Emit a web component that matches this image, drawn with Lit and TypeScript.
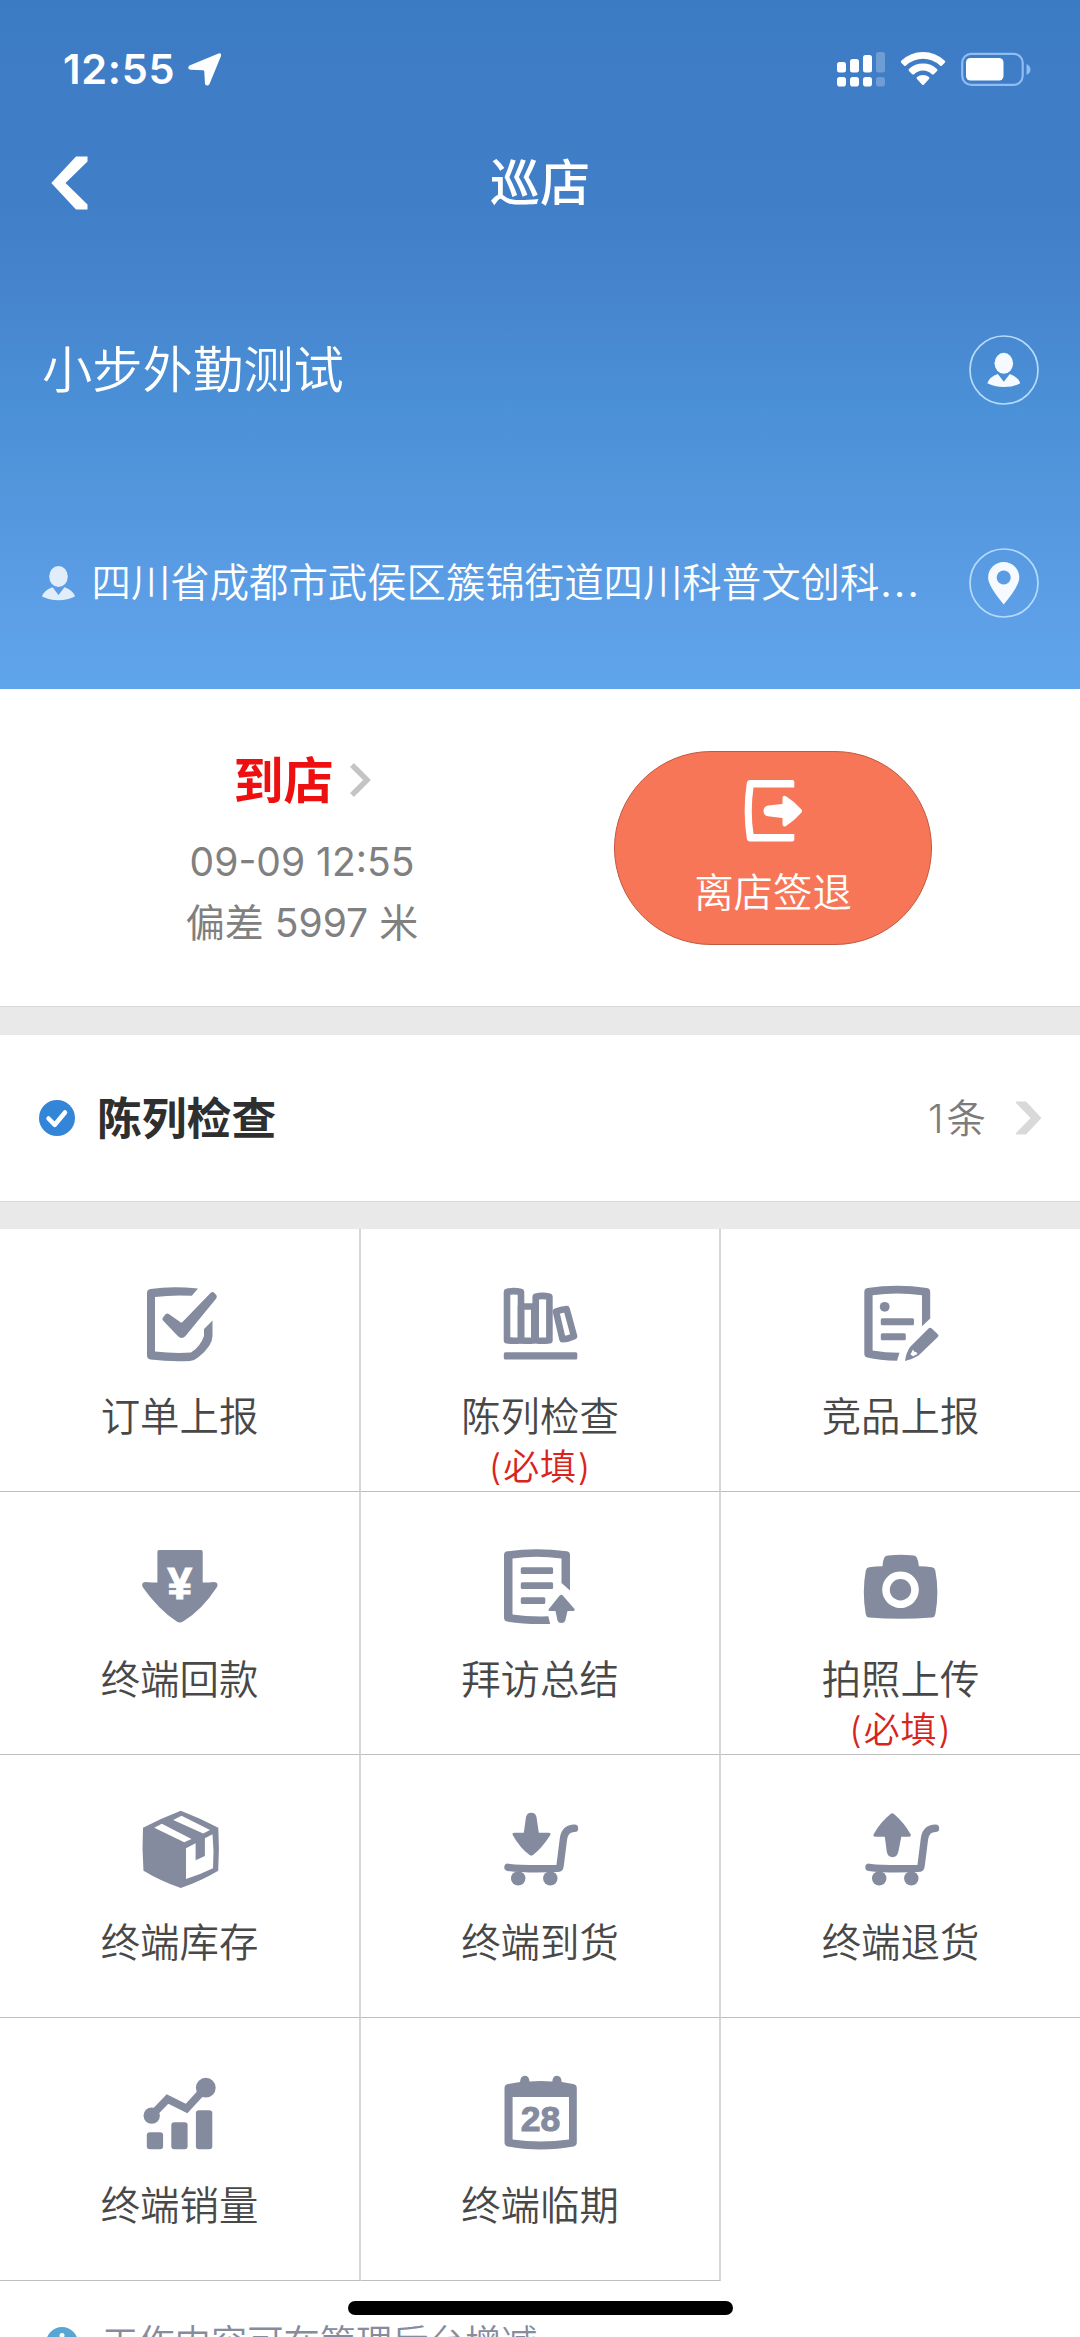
import { LitElement, html, css, svg, nothing, type TemplateResult } from "lit";
import { customElement, property } from "lit/decorators.js";

const FONT = css`Inter, "Noto Sans CJK SC", sans-serif`;

/* Task icons, all drawn on an 80 x 80 grid in the current colour. */
const cart = svg`
  <path d="M8 57.3Q26 59.6 57 58.4Q59.8 58.4 60.1 55.5L63.5 28.5Q65 18.6 74.5 18.3" fill="none" stroke="currentColor" stroke-width="7.4" stroke-linecap="round" stroke-linejoin="round"/>
  <circle cx="18.2" cy="68.4" r="7.2"/><circle cx="50.3" cy="68.4" r="7.2"/>`;

const icons: Record<string, TemplateResult> = {
  order: svg`
    <path d="M58 4.6Q32 1.6 10.5 5Q7 5.6 7 9.2V71.5Q7 75 10.5 75.5Q30 78 50 77Q54 77 58 73.6Q72.5 62 72.5 52V36.5L64 45V52Q60.5 62.500 51 68.600Q33 69.600 15 67.500V13Q33 10.700 51.800 11.800Z"/>
    <path d="M23 33.500L25.500 30.300Q27 28.800 28.800 30L40.500 38.300Q41.500 38.900 42.500 38L70.500 9Q72.600 7 74.400 9L76.300 11Q77.500 12.500 76.200 14.500L45.500 52Q41.600 56 37.800 52L23 36.500Q21.700 35 23 33.500Z"/>`,
  shelf: svg`
    <g fill="none" stroke="currentColor" stroke-width="6.6" stroke-linejoin="round">
      <path d="M7 8Q13.500 6.300 21 8V56.200Q13.500 57.300 7 56.200Z"/>
      <path d="M21 22.500H34.300V56.200Q28 57.300 21 56.200Z"/>
      <path d="M35.700 12.800Q42.500 11 49.400 12.800V56.200Q42.500 57.300 35.700 56.200Z"/>
      <path d="M56 27.600Q61 25.500 66.600 25L74 52.200Q68 55 62.500 55.300Z"/>
    </g>
    <rect x="3.800" y="68.200" width="73.500" height="7.200" rx="1.500"/>`,
  rival: svg`
    <path d="M36 76.800Q18 76.500 6.300 73.600Q3.300 72.800 3.300 69.500V8Q3.300 4.600 6.500 4Q36 -.6 66 4Q69.200 4.700 69.200 8V34.500L61 42.300V11.300Q36 7.600 11.600 11.300V66.500Q24 68.700 38.500 68.700Z"/>
    <circle cx="23.700" cy="22.800" r="4.900"/>
    <rect x="19.800" y="34.200" width="33.200" height="7" rx="1.500"/>
    <rect x="19.800" y="49.300" width="25" height="7" rx="1.500"/>
    <path fill-rule="evenodd" d="M67.500 44.500Q69 43 70.500 44.300L76.800 50.300Q78.200 51.600 76.800 53L57.500 71.500Q52 75 44 77Q45 69 49 63ZM52 65.500L49.500 70.600L52 72.300L56.500 70L55 67.800L53.500 68Z"/>`,
  payment: svg`
    <path d="M19 3H61Q62.700 3 62.700 5V35.500Q69 35.500 74 35Q79 35.500 77 40Q62 63 43 74.600Q39.800 76.300 36.700 74.600Q18 62 2.600 40Q.8 35.500 5.500 35Q12 35.500 17.400 35.500V5Q17.400 3 19 3Z"/>
    <text class="mark" x="39.800" y="52" font-size="44" text-anchor="middle">¥</text>`,
  summary: svg`
    <path d="M50.200 76.900Q26 77.800 7 74.500Q4 74 4 70.500V8Q4 4.800 7 4.300Q36 .2 67 4.300Q70 4.800 70 8V43.500L61.500 36V11.500Q36 8 12.500 11.500V67.500Q28 69.800 48.300 69.300Z"/>
    <rect x="20.800" y="20.300" width="32.300" height="6.800" rx="1.500"/>
    <rect x="20.800" y="35.300" width="32.300" height="6.800" rx="1.500"/>
    <rect x="20.800" y="50.200" width="24.500" height="6.800" rx="1.500"/>
    <path d="M59.500 48.800Q61.300 46.900 63 48.800L74.300 61.800Q75.600 64 73 64H67.500L65.300 73.500Q64.600 76 61.500 76T57.500 73.500L55.500 64H50Q47.500 64 49 61.800Z"/>`,
  camera: svg`
    <path fill-rule="evenodd" d="M21.500 19.300Q21.500 14 23.500 10.300Q24.600 8.700 27 8.500Q39.500 7 52.500 8.500Q54.700 8.700 55.600 10.300Q57.600 14 57.900 19.300Q65 19.300 71 20.300Q73.700 20.700 74.300 23.500Q78.500 45 74.300 67.500Q73.700 70.200 71 70.500Q39.500 73.200 8 70.500Q5.400 70.200 4.800 67.500Q.8 45 4.800 23.500Q5.400 20.700 8 20.300Q14.500 19.300 21.500 19.300ZM39.500 24.400a18.300 18.300 0 1 0 .01 0Z"/>
    <circle cx="39.500" cy="42.700" r="10.700"/>`,
  stock: svg`
    <path fill-rule="evenodd" d="M40.800 .7Q61 8.500 78.300 17.700Q79.600 39 78.200 60.700Q61 71 40.800 78Q20.500 71 3.500 60.700Q1.800 39 3 17.700Q20.500 8.500 40.800 .7ZM14.300 17.700L44.200 32.300L51.500 29L21.800 13.800ZM33.200 10L63.200 23.500L70 20L41.500 5.700ZM46 38.300V69Q60.500 64.500 73 58.300Q74.300 41 72.500 24.300L64.900 28.300V46L55.600 50.300V33.300Z"/>`,
  arrive: svg`
    <path d="M31.300 2.700Q35.500 2.700 36.500 7L38.800 22.700H48.500Q51.500 23 50 25.500Q42 38 33 45Q31.300 46.200 29.600 45Q20 38 13 25.500Q11.500 23 14.500 22.700H23.800L26 7Q27 2.700 31.300 2.700Z"/>${cart}`,
  refund: svg`
    <path d="M29.500 4Q31.200 2.500 33 4Q43 12.500 49.500 24Q50.500 26.600 48 26.700H40.300L37.300 42Q36 47.200 31.500 47.200T25.800 42L23.800 26.700H14.500Q11.500 26.600 12.800 24Q19 12.500 29.500 4Z"/>${cart}`,
  sales: svg`
    <path d="M11.500 42.700L27.500 26L46.500 35.500L65.800 14.700" fill="none" stroke="currentColor" stroke-width="7.600"/>
    <circle cx="11.700" cy="42.600" r="8.200"/><circle cx="65.800" cy="14.700" r="9.900"/>
    <rect x="6.800" y="59.200" width="16.300" height="17" rx="3"/>
    <rect x="31.300" y="49.200" width="16.300" height="27" rx="3"/>
    <rect x="55.900" y="37.300" width="16.400" height="38.900" rx="3"/>`,
  expiry: svg`
    <path fill-rule="evenodd" d="M20 9Q20.500 2.700 24.800 2.700T29.500 8.500Q40 7.500 52.300 8.500Q52.700 2.700 57 2.700T61.700 9L73 11Q76.800 11.700 76.800 15V69.500Q76.800 72.500 73.500 73.500Q58 76.500 40.600 76.500T7.800 73.500Q4.500 72.500 4.500 69.500V15Q4.500 11.700 8.200 11ZM12.600 24V66.500Q40.600 70.500 69 66.500V24Z"/>
    <text x="40.600" y="58" font-size="35.500" text-anchor="middle" stroke="currentColor" stroke-width="1">28</text>`,
};

const person = svg`
  <ellipse cx="16.500" cy="10.500" rx="9.300" ry="10.500"/>
  <path d="M10.500 21.200L16.500 29L22.500 21.200Q31.500 24.500 33 30.500Q26 34.200 16.500 34.200T0 30.500Q1.500 24.500 10.500 21.200Z"/>`;

@customElement("task-cell")
export class TaskCell extends LitElement {
  @property() icon = "";
  @property() label = "";
  @property({ type: Boolean }) required = false;

  static styles = css`
    :host { display: flex; flex-direction: column; align-items: center; box-sizing: border-box; height: 263px; padding-top: 55px; font-family: ${FONT}; font-weight: 350; border-right: 2px solid #d6d6d6; border-bottom: 1px solid #bebebe; }
    :host([edge]) { border-right: none; }
    .icon { flex: none; width: 80px; height: 80px; color: #858b9f; fill: currentColor; font-family: "Liberation Sans", sans-serif; font-weight: 700; display: block; }
    .mark { fill: #fff; stroke: #fff; stroke-width: 1.200px; }
    .label { flex: none; margin-top: 28px; font-size: 39.400px; line-height: 50px; color: #484848; white-space: nowrap; }
    .required { flex: none; font-size: 36px; line-height: 48px; margin-top: 1px; letter-spacing: .8px; color: #d8241c; white-space: nowrap; }
    .paren { margin: 0 1px; }
  `;

  render() {
    return html`
      <svg class="icon" viewBox="0 0 80 80">${icons[this.icon]}</svg>
      <div class="label">${this.label}</div>
      ${this.required ? html`<div class="required"><span class="paren">(</span>必填<span class="paren">)</span></div>` : nothing}
    `;
  }
}

const tasks = [
  { icon: "order", label: "订单上报" },
  { icon: "shelf", label: "陈列检查", required: true },
  { icon: "rival", label: "竞品上报" },
  { icon: "payment", label: "终端回款" },
  { icon: "summary", label: "拜访总结" },
  { icon: "camera", label: "拍照上传", required: true },
  { icon: "stock", label: "终端库存" },
  { icon: "arrive", label: "终端到货" },
  { icon: "refund", label: "终端退货" },
  { icon: "sales", label: "终端销量" },
  { icon: "expiry", label: "终端临期" },
];

@customElement("app-root")
export class AppRoot extends LitElement {
  static styles = css`
    :host { display: block; position: relative; width: 1080px; height: 2337px; overflow: hidden; background: #fff; font-family: ${FONT}; font-weight: 350; }
    svg { display: block; flex: none; }
    .header { box-sizing: border-box; height: 689px; color: #fff; background: linear-gradient(#3a7cc4 0, #407dc7 90px, #417ec8 200px, #4684ce 290px, #4b91d7 410px, #5497de 510px, #5da0e8 620px, #5fa5ec 689px); }
    .status { display: flex; align-items: center; height: 138px; padding: 0 49px 0 63px; }
    .time { font-size: 41.500px; font-weight: 600; letter-spacing: .700px; width: 124px; white-space: nowrap; }
    .signals { margin-left: auto; display: flex; align-items: center; gap: 15px; }
    .nav { display: grid; grid-template-columns: 1fr auto 1fr; align-items: center; height: 90px; padding: 0 51px; }
    .title { font-size: 50px; font-weight: 500; line-height: 60px; }
    .row { display: flex; align-items: center; padding: 0 41px 0 42px; }
    .name-row { height: 284px; }
    .address-row { height: 142px; }
    .name { flex: 1; font-size: 50.300px; line-height: 60px; }
    .address { flex: 1; font-size: 39.400px; line-height: 50px; margin-left: 16.500px; white-space: nowrap; }
    .more { font-size: 48px; line-height: 0; }
    .faded { opacity: .82; }
    .visit { display: flex; box-sizing: border-box; height: 317px; }
    .arrival { width: 604px; box-sizing: border-box; padding-top: 60px; display: flex; flex-direction: column; align-items: center; }
    .arrival-title { display: flex; align-items: center; gap: 16px; height: 62px; line-height: 62px; color: #ee1010; font-size: 50px; font-weight: 700; }
    .arrival-name { padding-top: 2px; }
    .detail { color: #808080; font-size: 39px; font-weight: 400; line-height: 61px; white-space: nowrap; }
    .detail.first { margin-top: 20px; }
    .leave { box-sizing: border-box; width: 318px; height: 194px; margin: 62px 0 0 10px; border: 1px solid #c05a42; border-radius: 97px; background: #f87658; color: #fff; display: flex; flex-direction: column; align-items: center; padding-top: 28px; font-size: 39.400px; line-height: 50px; gap: 26px; }
    .band { box-sizing: border-box; height: 29px; background: #e9e9e9; border-top: 1px solid #d9d9d9; }
    .band.short { height: 28px; }
    .summary { display: flex; align-items: center; height: 166px; box-sizing: border-box; padding: 0 38px 0 39px; }
    .summary-title { margin-left: 22px; padding-top: 2px; font-size: 44.800px; line-height: 60px; font-weight: 600; color: #2f2f2f; flex: 1; }
    .count { color: #7c7c7c; font-size: 39.400px; line-height: 50px; margin-right: 30px; padding-top: 1px; }
    .count-number { margin-right: 3px; }
    .grid { display: grid; grid-template-columns: 361px 360px 359px; }
    .notice { display: flex; align-items: center; height: 50px; margin-top: 37px; padding-left: 46px; gap: 24px; color: #868b9e; font-size: 36.300px; line-height: 50px; white-space: nowrap; }
    .home { position: absolute; left: 348px; top: 2301px; width: 385px; height: 14px; border-radius: 7px; background: #000; }
  `;

  render() {
    return html`
      <div class="header">
        <div class="status">
          <div class="time">12:55</div>
          <svg width="35" height="35" viewBox="0 0 35 35" fill="#fff"><path d="M31.500 1.500Q34.700 .5 34 4L22.500 32Q20.500 35 18 32.300L17.300 19.500Q17.200 18.300 16 18.200L3.500 17.800Q-.5 16.500 2.500 13.500Z"/></svg>
          <div class="signals">
            <svg width="48" height="35" viewBox="0 0 48 35" fill="#fff">
              <rect x="0" y="10" width="9" height="10.500" rx="2.500"/><rect x="13" y="7" width="9" height="13.500" rx="2.500"/><rect x="26" y="3" width="9" height="17.500" rx="2.500"/><rect x="39" y="0" width="9" height="20.500" rx="2.500" opacity=".25"/>
              <rect x="0" y="25" width="9" height="9.500" rx="2.800"/><rect x="13" y="25" width="9" height="9.500" rx="2.800"/><rect x="26" y="25" width="9" height="9.500" rx="2.800"/><rect x="39" y="25" width="9" height="9.500" rx="2.800" opacity=".25"/>
            </svg>
            <svg width="46" height="35" viewBox="0 0 46 35" fill="#fff">
              <path d="M1.200 8.800Q10.500 0 23 0T44.800 8.800Q45.700 9.700 44.800 10.700L42 13.500Q41 14.500 40 13.500Q32.500 6.700 23 6.700T6 13.500Q5 14.500 4 13.500L1.200 10.700Q.3 9.700 1.200 8.800Z"/>
              <path d="M9 17Q15 11.600 23 11.600T37 17Q38 18 37 19L33.800 22.200Q32.800 23 31.800 22.200Q28 18.600 23 18.600T14.200 22.200Q13.200 23 12.200 22.200L9 19Q8 18 9 17Z"/>
              <path d="M17 25Q19.500 23 23 23T29 25Q30 26 29 27L24 32.500Q23 33.500 22 32.500L17 27Q16 26 17 25Z"/>
            </svg>
            <svg width="70" height="35" viewBox="0 0 70 35">
              <rect x="1.200" y="1.800" width="60.500" height="31" rx="9" fill="none" stroke="#8fbcf2" stroke-width="2.200"/>
              <rect x="5" y="6" width="37.500" height="22.600" rx="4.500" fill="#fff"/><path d="M65.500 12Q69.500 14 69.500 17.500T65.500 23Z" fill="#8fbcf2"/>
            </svg>
          </div>
        </div>
        <div class="nav">
          <svg width="37" height="54" viewBox="0 0 37 54" fill="#fff"><path d="M25 .5H36.500V5.500L14.500 27L36.500 48.500V53.500H25L.3 27Z"/></svg>
          <div class="title">巡店</div>
        </div>
        <div class="row name-row">
          <div class="name">小步外勤测试</div>
          <svg width="70" height="70" viewBox="0 0 70 70" fill="#f4faff"><circle cx="35" cy="35" r="34" fill="none" stroke="#b5dbfb" stroke-width="1.700"/><g transform="translate(18.300 17.800)">${person}</g></svg>
        </div>
        <div class="row address-row">
          <svg class="faded" width="33" height="35" viewBox="0 0 33 35" fill="#fff">${person}</svg>
          <div class="address">四川省成都市武侯区簇锦街道四川科普文创科<span class="more">…</span></div>
          <svg width="70" height="70" viewBox="0 0 70 70" fill="#f4faff"><circle cx="35" cy="35" r="34" fill="none" stroke="#b5dbfb" stroke-width="1.700"/><path fill-rule="evenodd" d="M34.700 14A15.600 15.600 0 0 1 50.300 29.600Q50.300 38 34.700 56.500Q19.100 38 19.100 29.600A15.600 15.600 0 0 1 34.700 14ZM34.700 22.500a7 7 0 1 0 .01 0Z"/></svg>
        </div>
      </div>
      <div class="visit">
        <div class="arrival">
          <div class="arrival-title">
            <span class="arrival-name">到店</span>
            <svg width="21" height="34" viewBox="0 0 21 34" fill="none" stroke="#c4c4c4" stroke-width="5.500"><path d="M2 2L17 17L2 32"/></svg>
          </div>
          <div class="detail first">09-09 12:55</div>
          <div class="detail">偏差 5997 米</div>
        </div>
        <div class="leave">
          <svg width="58" height="62" viewBox="0 0 58 62" fill="#fff"><path d="M48.500 0Q50.300 0 50.300 2V7.500H9.500Q6 31 9.500 54H50.300V59.500Q50.300 61.500 48.500 61.500H6Q3.300 61.500 2.800 58.500Q-1.500 31 2.800 3Q3.300 0 6 0Z"/><path d="M24 25.500L38.500 24V17.500Q39 14.500 42 16.300Q51 22 57.500 29.500Q58.500 31 57.500 32.500Q51 40 42 46Q39 47.500 38.500 44.500V38L24 36.300Q19.500 35.500 19.500 31T24 25.500Z"/></svg>
          <div>离店签退</div>
        </div>
      </div>
      <div class="band"></div>
      <div class="summary">
        <svg width="36" height="36" viewBox="0 0 36 36"><circle cx="18" cy="18" r="18" fill="#3385d8"/><path d="M9.500 18.500L15.800 24.800L26 12.500" fill="none" stroke="#fff" stroke-width="4.500" stroke-linecap="round" stroke-linejoin="round"/></svg>
        <div class="summary-title">陈列检查</div>
        <div class="count"><span class="count-number">1</span>条</div>
        <svg width="26" height="34" viewBox="0 0 26 34" fill="#d9d9d9"><path d="M0 .5H10L25.500 17L10 33.500H0V32L14.500 17L0 2Z"/></svg>
      </div>
      <div class="band short"></div>
      <div class="grid">
        ${tasks.map((t, i) => html`<task-cell icon=${t.icon} label=${t.label} ?required=${t.required} ?edge=${i % 3 === 2}></task-cell>`)}
      </div>
      <div class="notice">
        <svg width="32" height="32" viewBox="0 0 32 32"><circle cx="16" cy="16" r="16" fill="#58a6d3"/><circle cx="16" cy="8.500" r="2.500" fill="#fff"/><rect x="13.800" y="13" width="4.400" height="12" fill="#fff"/></svg>
        <div>工作内容可在管理后台增减</div>
      </div>
      <div class="home"></div>
    `;
  }
}
